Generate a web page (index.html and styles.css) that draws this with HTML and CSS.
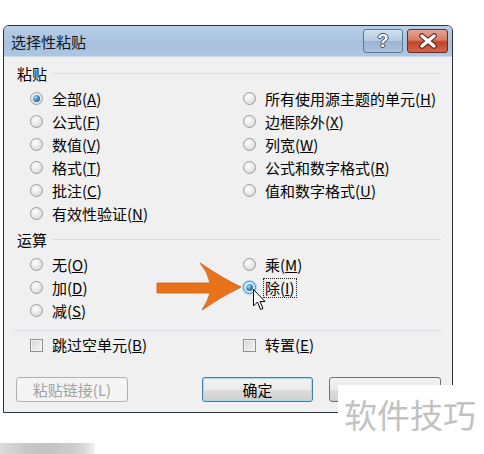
FILE: index.html
```html
<!DOCTYPE html>
<html lang="zh-CN">
<head>
<meta charset="utf-8">
<title>选择性粘贴</title>
<link rel="stylesheet" href="styles.css">
</head>
<body>
<div class="dialog">
  <div class="titlebar">
    <span class="title">选择性粘贴</span>
    <span class="tb help">?</span>
    <span class="tb close">
      <svg width="22" height="16" viewBox="0 0 22 16">
        <path d="M5 3 L17 13 M17 3 L5 13" stroke="#5a1d16" stroke-width="5.5" stroke-linecap="round"/>
        <path d="M5 3 L17 13 M17 3 L5 13" stroke="#fff" stroke-width="3.5" stroke-linecap="round"/>
      </svg>
    </span>
  </div>
  <div class="body">
    <div class="group"><span>粘贴</span><i class="line"></i></div>
    <div class="opts six">
      <label class="opt"><span class="radio on"></span><span>全部(<u>A</u>)</span></label>
      <label class="opt"><span class="radio"></span><span>公式(<u>F</u>)</span></label>
      <label class="opt"><span class="radio"></span><span>数值(<u>V</u>)</span></label>
      <label class="opt"><span class="radio"></span><span>格式(<u>T</u>)</span></label>
      <label class="opt"><span class="radio"></span><span>批注(<u>C</u>)</span></label>
      <label class="opt"><span class="radio"></span><span>有效性验证(<u>N</u>)</span></label>
      <label class="opt"><span class="radio"></span><span>所有使用源主题的单元(<u>H</u>)</span></label>
      <label class="opt"><span class="radio"></span><span>边框除外(<u>X</u>)</span></label>
      <label class="opt"><span class="radio"></span><span>列宽(<u>W</u>)</span></label>
      <label class="opt"><span class="radio"></span><span>公式和数字格式(<u>R</u>)</span></label>
      <label class="opt"><span class="radio"></span><span>值和数字格式(<u>U</u>)</span></label>
    </div>
    <div class="group second"><span>运算</span><i class="line"></i></div>
    <div class="opts three">
      <label class="opt"><span class="radio"></span><span>无(<u>O</u>)</span></label>
      <label class="opt"><span class="radio"></span><span>加(<u>D</u>)</span></label>
      <label class="opt"><span class="radio"></span><span>减(<u>S</u>)</span></label>
      <label class="opt"><span class="radio"></span><span>乘(<u>M</u>)</span></label>
      <label class="opt"><span class="radio on focus"></span><span class="focusrect">除(<u>I</u>)</span></label>
    </div>
    <div class="sep"></div>
    <div class="checks">
      <label class="opt"><span class="check"></span><span>跳过空单元(<u>B</u>)</span></label>
      <label class="opt"><span class="check"></span><span>转置(<u>E</u>)</span></label>
    </div>
    <div class="buttons">
      <span class="btn disabled">粘贴链接(L)</span>
      <span class="btn default">确定</span>
      <span class="btn"></span>
    </div>
  </div>
</div>

<svg class="arrow" width="100" height="60" viewBox="0 0 100 60">
  <path d="M7 28 L60 28 Q58 17 50 8 Q72 23 91 32 Q72 41 52 55 Q58 46 60 38 L7 38 Z" fill="#e9721b" stroke="#c95d12" stroke-width="0.8"/>
</svg>

<svg class="cursor" width="13" height="22" viewBox="0 0 13 22">
  <path d="M0.5 0.5 L0.5 17 L4.5 13 L7.5 20.5 L10 19.5 L7 12.5 L12 12.5 Z" fill="#fff" stroke="#000" stroke-width="1"/>
</svg>

<div class="watermark">软件技巧</div>
<div class="blob"></div>
</body>
</html>
```

FILE: styles.css
```css
html, body {
  margin: 0;
  padding: 0;
}
body {
  width: 484px;
  height: 454px;
  position: relative;
  overflow: hidden;
  background: #fff;
  font-family: "Noto Sans CJK SC", "Liberation Sans", sans-serif;
  color: #000;
}
.dialog {
  margin: 25px 0 0 3px;
  width: 448px;
  border: 1px solid #28323c;
  border-radius: 6px 6px 0 0;
  background: #f0f0f0;
}
.titlebar {
  height: 31px;
  box-sizing: border-box;
  display: flex;
  align-items: flex-start;
  padding: 3px 4px 0 7px;
  border-radius: 5px 5px 0 0;
  background: linear-gradient(#b9cfe8, #a7c1de 60%, #adc6e1);
  border-bottom: 1px solid #c9d9ea;
}
.title {
  flex: 1;
  font-size: 15px;
  line-height: 26px;
  color: #101820;
}
.tb {
  height: 24px;
  box-sizing: border-box;
  border: 1px solid #5f7891;
  border-radius: 3px;
  display: flex;
  align-items: center;
  justify-content: center;
}
.help {
  width: 40px;
  margin-right: 4px;
  background: linear-gradient(#d3e2f1, #b4cbe3 48%, #9ab5d3 52%, #a9c2dd);
  color: #fff;
  font-family: "Liberation Sans", sans-serif;
  font-weight: bold;
  font-size: 18px;
  line-height: 22px;
  text-shadow: -1px 0 #3c4d60, 1px 0 #3c4d60, 0 -1px #3c4d60, 0 1px #3c4d60;
}
.close {
  width: 41px;
  border-color: #6b2b22;
  background: linear-gradient(#e5a497, #d77a66 45%, #c4432b 55%, #d2674e);
}
.body {
  padding: 7px 11px 10px 13px;
}
.group {
  display: flex;
  align-items: center;
  gap: 6px;
  height: 20px;
  font-size: 15px;
  line-height: 20px;
}
.group.second {
  margin-top: 5px;
}
.group .line {
  flex: 1;
  height: 1px;
  background: #d5dbe1;
  margin-top: -2px;
}
.opts {
  display: grid;
  grid-auto-flow: column;
  grid-template-columns: 213px 200px;
  padding-left: 13px;
  margin-top: 3px;
}
.opts.six {
  grid-template-rows: repeat(6, 23px);
}
.opts.three {
  grid-template-rows: repeat(3, 23px);
}
.opt {
  display: flex;
  align-items: center;
  gap: 9px;
  font-size: 15px;
  line-height: 18px;
  white-space: nowrap;
}
.opt u {
  text-underline-offset: 1px;
}
.radio {
  width: 13px;
  height: 13px;
  box-sizing: border-box;
  border-radius: 50%;
  border: 1px solid #9a9c9e;
  background: radial-gradient(circle at 40% 35%, #ffffff, #e4e4e4 60%, #cfcfcf);
  display: flex;
  align-items: center;
  justify-content: center;
  flex: none;
}
.radio.on::after {
  content: "";
  width: 7px;
  height: 7px;
  border-radius: 50%;
  background: radial-gradient(circle at 35% 35%, #a9dcf6, #3a8fc7 45%, #16477c);
}
.radio.focus {
  border-color: #3d8ac1;
  box-shadow: 0 0 1px 1px #a6d2ee;
}
.focusrect {
  outline: 1px dotted #222;
  outline-offset: 0;
  padding: 0 1px;
  margin-left: -1px;
}
.sep {
  height: 1px;
  background: #d5dbe1;
  margin: 8px 0 0 -3px;
}
.checks {
  display: grid;
  grid-template-columns: 213px 200px;
  height: 22px;
  padding-left: 13px;
  margin-top: 3px;
}
.check {
  width: 13px;
  height: 13px;
  box-sizing: border-box;
  border: 1px solid #8e8f8f;
  background: linear-gradient(135deg, #d5d5d5, #f6f6f6);
  box-shadow: inset 0 0 0 1px #f4f4f4;
  flex: none;
}
.buttons {
  display: flex;
  margin: 21px 0 0 -1px;
}
.btn {
  width: 112px;
  height: 25px;
  box-sizing: border-box;
  border: 1px solid #707070;
  border-radius: 3px;
  background: linear-gradient(#f2f2f2, #ebebeb 50%, #dddddd 51%, #cfcfcf);
  font-size: 15px;
  line-height: 23px;
  text-align: center;
}
.btn.disabled {
  border-color: #adb2b5;
  background: #f4f4f4;
  color: #a3a3a3;
}
.btn.default {
  width: 111px;
  margin-left: 74px;
  border-color: #3c7fb1;
  box-shadow: inset 0 0 0 1px #a6dbf5;
}
.btn + .btn + .btn {
  margin-left: 16px;
}
.arrow {
  position: absolute;
  left: 150px;
  top: 255px;
}
.cursor {
  position: absolute;
  left: 253px;
  top: 289px;
}
.watermark {
  position: absolute;
  left: 338px;
  top: 385px;
  right: 0;
  bottom: 0;
  background: #fff;
  color: #c2c2c2;
  font-size: 33px;
  line-height: 58px;
  padding-left: 6px;
  white-space: nowrap;
}
.blob {
  position: absolute;
  left: 0;
  top: 443px;
  width: 95px;
  height: 11px;
  background: linear-gradient(90deg, #dcdcdc, #c9c9c9 25%, #c3c3c3 50%, #cdcdcd 75%, #d8d8d8 88%, #f2f2f2);
}
```
